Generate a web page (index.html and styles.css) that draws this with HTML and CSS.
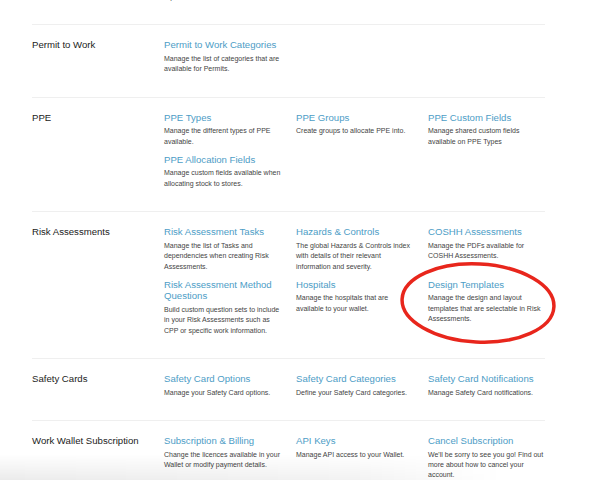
FILE: index.html
```html
<!DOCTYPE html>
<html>
<head>
<meta charset="utf-8">
<link rel="stylesheet" href="styles.css">
</head>
<body>
<div class="page">
  <section class="sec">
    <div class="label"></div>
    <div class="item">
      <a class="title">Reports</a>
      <p class="desc">Manage the sections that are shown in report.</p>
    </div>
  </section>

  <section class="sec">
    <div class="label">Permit to Work</div>
    <div class="item">
      <a class="title">Permit to Work Categories</a>
      <p class="desc">Manage the list of categories that are available for Permits.</p>
    </div>
  </section>

  <section class="sec">
    <div class="label">PPE</div>
    <div class="item">
      <a class="title">PPE Types</a>
      <p class="desc">Manage the different types of PPE available.</p>
    </div>
    <div class="item">
      <a class="title">PPE Groups</a>
      <p class="desc">Create groups to allocate PPE into.</p>
    </div>
    <div class="item">
      <a class="title">PPE Custom Fields</a>
      <p class="desc">Manage shared custom fields available on PPE Types</p>
    </div>
    <div class="item c1">
      <a class="title">PPE Allocation Fields</a>
      <p class="desc">Manage custom fields available when allocating stock to stores.</p>
    </div>
  </section>

  <section class="sec">
    <div class="label">Risk Assessments</div>
    <div class="item">
      <a class="title">Risk Assessment Tasks</a>
      <p class="desc">Manage the list of Tasks and dependencies when creating Risk Assessments.</p>
    </div>
    <div class="item">
      <a class="title">Hazards &amp; Controls</a>
      <p class="desc">The global Hazards &amp; Controls index with details of their relevant information and severity.</p>
    </div>
    <div class="item">
      <a class="title">COSHH Assessments</a>
      <p class="desc">Manage the PDFs available for COSHH Assessments.</p>
    </div>
    <div class="item c1">
      <a class="title">Risk Assessment Method Questions</a>
      <p class="desc">Build custom question sets to include in your Risk Assessments such as CPP or specific work information.</p>
    </div>
    <div class="item">
      <a class="title">Hospitals</a>
      <p class="desc">Manage the hospitals that are available to your wallet.</p>
    </div>
    <div class="item marked">
      <a class="title">Design Templates</a>
      <p class="desc">Manage the design and layout templates that are selectable in Risk Assessments.</p>
      <svg class="circle" width="160" height="86" viewBox="0 0 160 86">
        <ellipse cx="80" cy="43" rx="76" ry="39" fill="none" stroke="#e8261c" stroke-width="3.5" transform="rotate(3 80 43)"/>
      </svg>
    </div>
  </section>

  <section class="sec">
    <div class="label">Safety Cards</div>
    <div class="item">
      <a class="title">Safety Card Options</a>
      <p class="desc">Manage your Safety Card options.</p>
    </div>
    <div class="item">
      <a class="title">Safety Card Categories</a>
      <p class="desc">Define your Safety Card categories.</p>
    </div>
    <div class="item">
      <a class="title">Safety Card Notifications</a>
      <p class="desc">Manage Safety Card notifications.</p>
    </div>
  </section>

  <section class="sec">
    <div class="label">Work Wallet Subscription</div>
    <div class="item">
      <a class="title">Subscription &amp; Billing</a>
      <p class="desc">Change the licences available in your Wallet or modify payment details.</p>
    </div>
    <div class="item">
      <a class="title">API Keys</a>
      <p class="desc">Manage API access to your Wallet.</p>
    </div>
    <div class="item">
      <a class="title">Cancel Subscription</a>
      <p class="desc">We'll be sorry to see you go! Find out more about how to cancel your account.</p>
    </div>
  </section>
</div>
<div class="shade"></div>
</body>
</html>
```
FILE: styles.css
```css
html, body {
  margin: 0;
  padding: 0;
  background: #fff;
  overflow: hidden;
}
body {
  font-family: "Liberation Sans", Arial, sans-serif;
  color: #333;
}
.page {
  margin: -47px 0 0 32px;
  width: 513px;
}
.sec {
  display: grid;
  grid-template-columns: 120px 120px 120px 120px;
  column-gap: 12px;
  padding: 14px 0 15px;
  border-top: 1px solid #efefef;
}
.sec:first-child {
  border-top: none;
}
.label {
  grid-column: 1;
  grid-row: 1;
  font-size: 9.6px;
  line-height: 12px;
  color: #222;
  white-space: nowrap;
}
.item {
  margin-bottom: 7px;
  position: relative;
}
.item.c1 {
  grid-column: 2;
}
.title {
  display: block;
  font-size: 9.6px;
  line-height: 11.5px;
  color: #4d9dc6;
  margin-bottom: 3px;
}
.desc {
  margin: 0;
  font-size: 7px;
  line-height: 10.4px;
  color: #444;
}
.circle {
  position: absolute;
  left: -30px;
  top: -19px;
}
.shade {
  position: fixed;
  left: 0;
  right: 0;
  bottom: 0;
  height: 26px;
  background: linear-gradient(to right, rgba(0,0,0,0.08), rgba(0,0,0,0.05) 60%, rgba(0,0,0,0) 85%);
  -webkit-mask-image: linear-gradient(to bottom, transparent, #000);
  mask-image: linear-gradient(to bottom, transparent, #000);
  pointer-events: none;
}
```
